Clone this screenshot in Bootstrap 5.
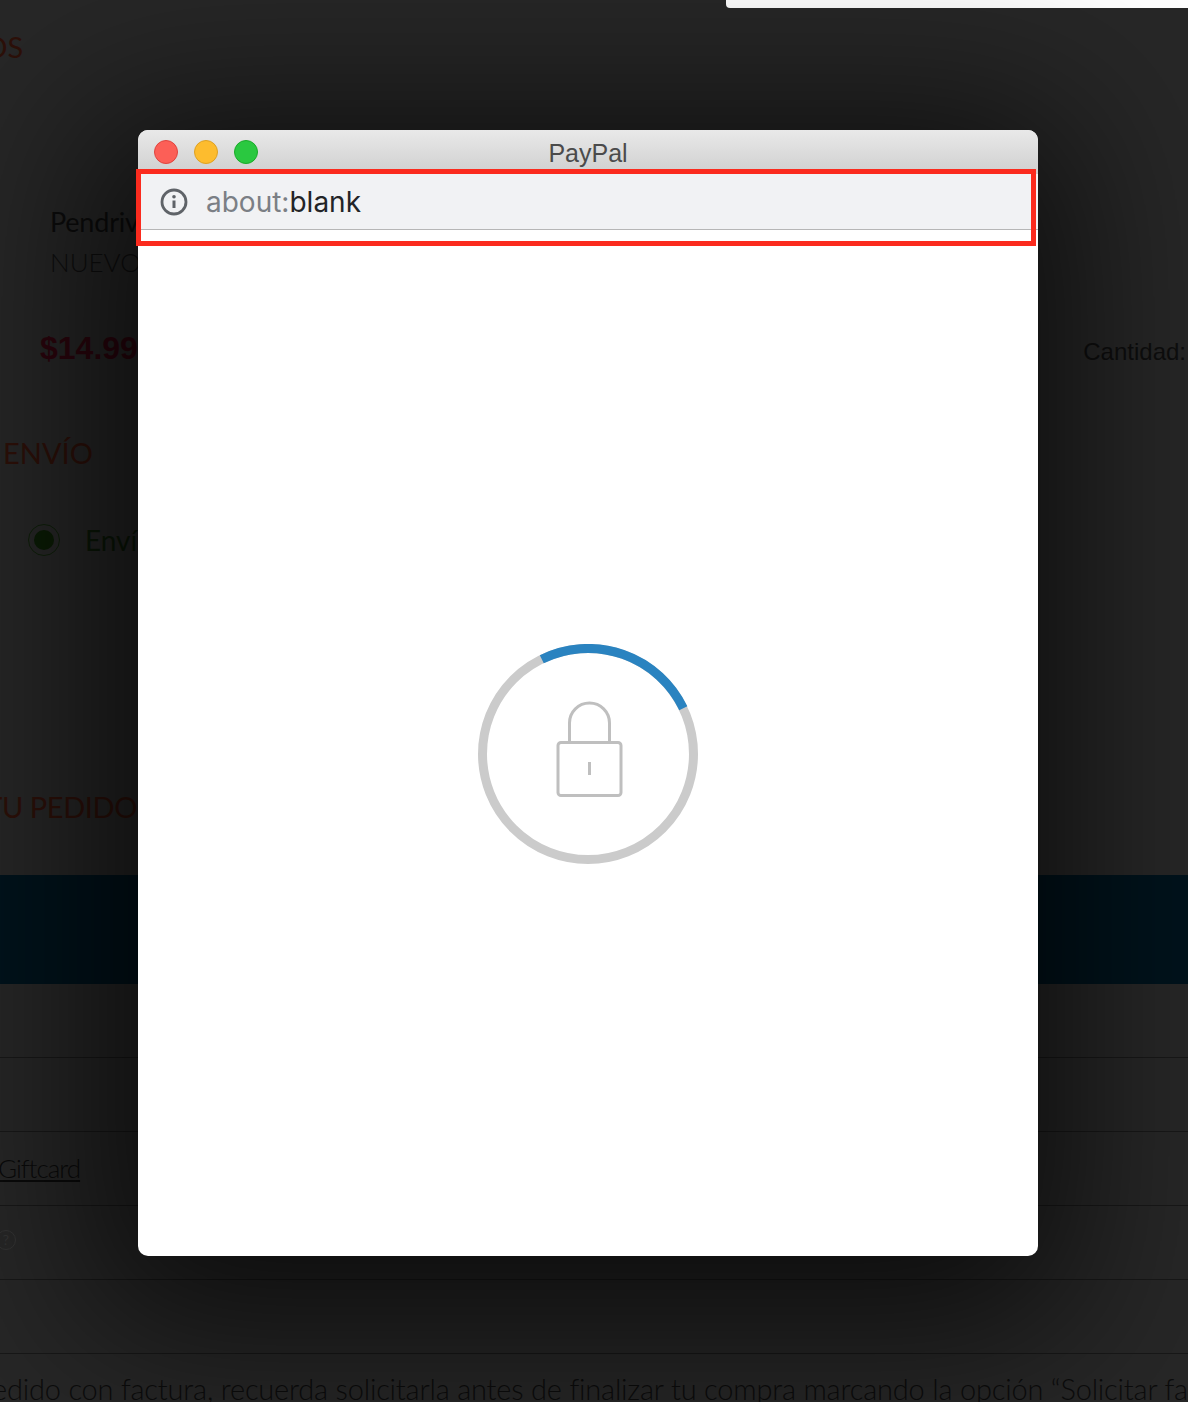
<!DOCTYPE html>
<html lang="es">
<head>
  <meta charset="UTF-8">
  <meta name="viewport" content="width=device-width, initial-scale=1.0">
  <title>PayPal</title>
  <link href="https://cdn.jsdelivr.net/npm/bootstrap@5.3.0/dist/css/bootstrap.min.css" rel="stylesheet">
  <style>
    html, body { height: 100%; }
    body { background: #272727; overflow: hidden; font-family: "Lato", "Liberation Sans", sans-serif; }

    /* dimmed page behind the popup */
    #backdrop { height: 1402px; width: 1188px; overflow: hidden; }
    #backdrop > * { flex-shrink: 0; }
    .top-strip { height: 8px; width: 462px; background: #fff; border-bottom-left-radius: 4px; }
    .back-head { color: #2d1009; font-size: 29px; line-height: 44px; white-space: nowrap; }
    .back-line { border-bottom: 1px solid #181818; height: 74px; }
    .clip-os { height: 79px; line-height: 77px; margin-left: -38px; }
    .prod-name { margin-top: 118px; padding-left: 50px; font-size: 27px; line-height: 34px; letter-spacing: -.2px; color: #0c0c0c; }
    .prod-state { margin-top: 6px; padding-left: 50px; font-size: 26px; line-height: 34px; font-weight: 300; color: #0f0f0f; }
    .price-row { margin-top: 46px; height: 50px; padding-left: 40px; padding-right: 2px; }
    .price-tag { font-family: "Liberation Sans", sans-serif; font-weight: 700; font-size: 32px; color: #2c050d; margin-top: -4px; }
    .qty-label { font-family: "Liberation Sans", sans-serif; font-size: 24px; color: #0e0e0e; margin-top: 4px; white-space: nowrap; }
    .ship-head { margin-top: 56px; padding-left: 3px; }
    .ship-row { margin-top: 45px; height: 40px; padding-left: 28px; gap: 25px; color: #0b1807; font-size: 28px; }
    .radio-ring { width: 32px; height: 32px; border: 1px solid #0f200a; border-radius: 50%; }
    .radio-dot { width: 20px; height: 20px; background: #0b1c05; border-radius: 50%; }
    .order-head { margin-top: 225px; margin-left: -21px; letter-spacing: -.4px; }
    .teal-band { margin-top: 46px; height: 109px; background: #00131c; }
    .gift-link { color: #0a0a0a; font-size: 26px; font-weight: 300; margin-left: -2px; letter-spacing: -1px; text-decoration: underline; }
    .help-mark { width: 20px; height: 20px; margin-left: -4px; margin-top: -6px; border: 1px solid #343434; border-radius: 50%; font-size: 14px; color: #343434; }
    .invoice-note { margin-top: 16px; margin-left: -8px; color: #0c0c0c; font-size: 29px; font-weight: 300; line-height: 38px; letter-spacing: -.2px; white-space: nowrap; }

    /* popup window */
    #popup { left: 138px; top: 130px; width: 900px; height: 1126px; background: #fff; border-radius: 10px; box-shadow: -10px 30px 170px 40px rgba(0,0,0,.7); }
    .title-bar { height: 44px; padding-left: 16px; gap: 16px; background: linear-gradient(#e9e9e9, #cfcfcf); border-radius: 10px 10px 0 0; }
    .light { width: 24px; height: 24px; border-radius: 50%; border: 1px solid; }
    .light-red { background: #fc5f57; border-color: #e0443e; }
    .light-yellow { background: #fdbc2e; border-color: #dea123; }
    .light-green { background: #2ac840; border-color: #1aab29; }
    .title-text { left: 0; right: 0; top: 0; line-height: 46px; font-family: "Liberation Sans", sans-serif; font-size: 25px; color: #4b4b4b; }
    .addr-bar { height: 56px; padding-left: 22px; gap: 18px; background: #f1f2f4; border-bottom: 1px solid #b6b6b6; font-family: "Inter", sans-serif; font-size: 28px; }
    .addr-scheme { color: #7b7f85; }
    .addr-path { color: #222427; }
    .spin-area { padding-top: 21px; }
    .lock-art { filter: blur(.5px); }
    #callout { left: 136px; top: 169px; width: 900px; height: 77px; border: 5px solid #fb2b1e; }
  </style>
</head>
<body>

<!-- Dimmed checkout page -->
<div id="backdrop" class="d-flex flex-column">
  <div class="d-flex justify-content-end"><div class="top-strip"></div></div>
  <div class="back-head clip-os">&nbsp;&nbsp;&nbsp;OS</div>
  <div class="prod-name">Pendrive</div>
  <div class="prod-state">NUEVO</div>
  <div class="price-row d-flex justify-content-between align-items-center">
    <span class="price-tag">$14.99</span>
    <span class="qty-label">Cantidad:</span>
  </div>
  <div class="back-head ship-head">ENVÍO</div>
  <div class="ship-row d-flex align-items-center">
    <span class="radio-ring d-flex align-items-center justify-content-center"><span class="radio-dot"></span></span>
    <span>Envío</span>
  </div>
  <div class="back-head order-head">&nbsp;TU PEDIDO</div>
  <div class="teal-band"></div>
  <div class="back-line"></div>
  <div class="back-line"></div>
  <div class="back-line d-flex align-items-center"><span class="gift-link">Giftcard</span></div>
  <div class="back-line d-flex align-items-center"><span class="help-mark d-flex align-items-center justify-content-center">?</span></div>
  <div class="back-line"></div>
  <div class="invoice-note">edido con factura, recuerda solicitarla antes de finalizar tu compra marcando la opción “Solicitar factura”</div>
</div>

<!-- PayPal popup -->
<div id="popup" class="position-absolute d-flex flex-column">
  <div class="title-bar position-relative d-flex align-items-center flex-shrink-0">
    <span class="light light-red"></span>
    <span class="light light-yellow"></span>
    <span class="light light-green"></span>
    <div class="title-text position-absolute text-center">PayPal</div>
  </div>
  <div class="addr-bar d-flex align-items-center flex-shrink-0">
    <svg width="28" height="28" viewBox="0 0 28 28" fill="none">
      <circle cx="14" cy="14" r="12" stroke="#5f6368" stroke-width="2.8"/>
      <circle cx="14" cy="8.8" r="1.8" fill="#5f6368"/>
      <path d="M14 12.5V20" stroke="#5f6368" stroke-width="3"/>
    </svg>
    <div><span class="addr-scheme">about:</span><span class="addr-path">blank</span></div>
  </div>
  <div class="spin-area flex-grow-1 d-flex align-items-center justify-content-center">
    <svg width="220" height="220" viewBox="0 0 220 220" fill="none">
      <circle cx="110" cy="110" r="105.5" stroke="#cbcbcb" stroke-width="9"/>
      <path d="M63.8 15.2A105.5 105.5 0 0 1 205.3 64.3" stroke="#2a83c0" stroke-width="9"/>
      <g class="lock-art" stroke="#bfbfbf" stroke-width="3">
        <rect x="80" y="98.5" width="63" height="53" rx="3"/>
        <path d="M91.5 98V79a20 20 0 0 1 40 0v19"/>
        <path d="M111.5 118v13" stroke-width="3"/>
      </g>
    </svg>
  </div>
</div>

<!-- Red annotation box -->
<div id="callout" class="position-absolute"></div>

</body>
</html>
